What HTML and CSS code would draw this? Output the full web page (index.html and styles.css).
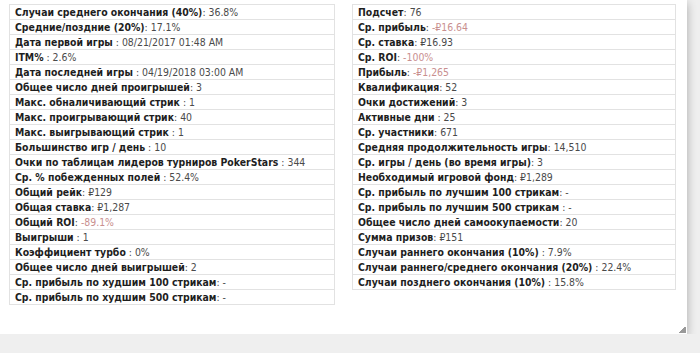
FILE: index.html
```html
<!DOCTYPE html>
<html lang="ru">
<head>
<meta charset="utf-8">
<title>Статистика</title>
<link rel="stylesheet" href="styles.css">
</head>
<body>
<div class="panel">
  <div class="cols">
    <table class="stats left">
      <tr><td><b>Случаи среднего окончания (40%)</b>: 36.8%</td></tr>
      <tr><td><b>Средние/поздние (20%)</b>: 17.1%</td></tr>
      <tr><td><b>Дата первой игры</b> : 08/21/2017 01:48 AM</td></tr>
      <tr><td><b>ITM%</b> : 2.6%</td></tr>
      <tr><td><b>Дата последней игры</b> : 04/19/2018 03:00 AM</td></tr>
      <tr><td><b>Общее число дней проигрышей</b>: 3</td></tr>
      <tr><td><b>Макс. обналичивающий стрик</b> : 1</td></tr>
      <tr><td><b>Макс. проигрывающий стрик</b>: 40</td></tr>
      <tr><td><b>Макс. выигрывающий стрик</b> : 1</td></tr>
      <tr><td><b>Большинство игр / день</b> : 10</td></tr>
      <tr><td><b>Очки по таблицам лидеров турниров PokerStars</b> : 344</td></tr>
      <tr><td><b>Ср. % побежденных полей</b> : 52.4%</td></tr>
      <tr><td><b>Общий рейк</b>: ₽129</td></tr>
      <tr><td><b>Общая ставка</b>: ₽1,287</td></tr>
      <tr><td><b>Общий ROI</b>: <span class="neg">-89.1%</span></td></tr>
      <tr><td><b>Выигрыши</b> : 1</td></tr>
      <tr><td><b>Коэффициент турбо</b> : 0%</td></tr>
      <tr><td><b>Общее число дней выигрышей</b>: 2</td></tr>
      <tr><td><b>Ср. прибыль по худшим 100 стрикам</b>: -</td></tr>
      <tr><td><b>Ср. прибыль по худшим 500 стрикам</b>: -</td></tr>
    </table>
    <table class="stats right">
      <tr><td><b>Подсчет</b>: 76</td></tr>
      <tr><td><b>Ср. прибыль</b>: <span class="neg">-₽16.64</span></td></tr>
      <tr><td><b>Ср. ставка</b>: ₽16.93</td></tr>
      <tr><td><b>Ср. ROI</b>: <span class="neg">-100%</span></td></tr>
      <tr><td><b>Прибыль</b>: <span class="neg">-₽1,265</span></td></tr>
      <tr><td><b>Квалификация</b>: 52</td></tr>
      <tr><td><b>Очки достижений</b>: 3</td></tr>
      <tr><td><b>Активные дни</b> : 25</td></tr>
      <tr><td><b>Ср. участники</b>: 671</td></tr>
      <tr><td><b>Средняя продолжительность игры</b>: 14,510</td></tr>
      <tr><td><b>Ср. игры / день (во время игры)</b>: 3</td></tr>
      <tr><td><b>Необходимый игровой фонд</b>: ₽1,289</td></tr>
      <tr><td><b>Ср. прибыль по лучшим 100 стрикам</b>: -</td></tr>
      <tr><td><b>Ср. прибыль по лучшим 500 стрикам</b> : -</td></tr>
      <tr><td><b>Общее число дней самоокупаемости</b>: 20</td></tr>
      <tr><td><b>Сумма призов</b>: ₽151</td></tr>
      <tr><td><b>Случаи раннего окончания (10%)</b> : 7.9%</td></tr>
      <tr><td><b>Случаи раннего/среднего окончания (20%)</b> : 22.4%</td></tr>
      <tr><td><b>Случаи позднего окончания (10%)</b> : 15.8%</td></tr>
    </table>
  </div>
  <div class="grip"></div>
</div>
</body>
</html>
```
FILE: styles.css
```css
html, body {
  margin: 0;
  padding: 0;
  background: #efefef;
}
body {
  font-family: "DejaVu Sans Condensed", "DejaVu Sans", sans-serif;
  font-stretch: semi-condensed;
  font-size: 10.4px;
  color: #4a4a4a;
}
.panel {
  position: relative;
  width: 687px;
  height: 334px;
  box-sizing: border-box;
  background: #fff;
  box-shadow: 0 3px 9px rgba(0, 0, 0, 0.3);
  padding: 4px 0 0 9px;
}
.cols {
  display: flex;
  align-items: flex-start;
  gap: 17px;
}
.stats {
  border-collapse: collapse;
  table-layout: fixed;
}
.stats.left { width: 326px; }
.stats.right { width: 324px; }
.stats td {
  border: 1px solid #e2e2e2;
  height: 14px;
  line-height: 14px;
  padding: 0 5px;
  white-space: nowrap;
  overflow: hidden;
}
.stats b {
  color: #1e1e1e;
  font-weight: bold;
}
.neg {
  color: #c98f8f;
}
.grip {
  position: absolute;
  right: 1px;
  bottom: 1px;
  width: 7px;
  height: 7px;
  background: linear-gradient(135deg, transparent 50%, #999 50%);
}
```
